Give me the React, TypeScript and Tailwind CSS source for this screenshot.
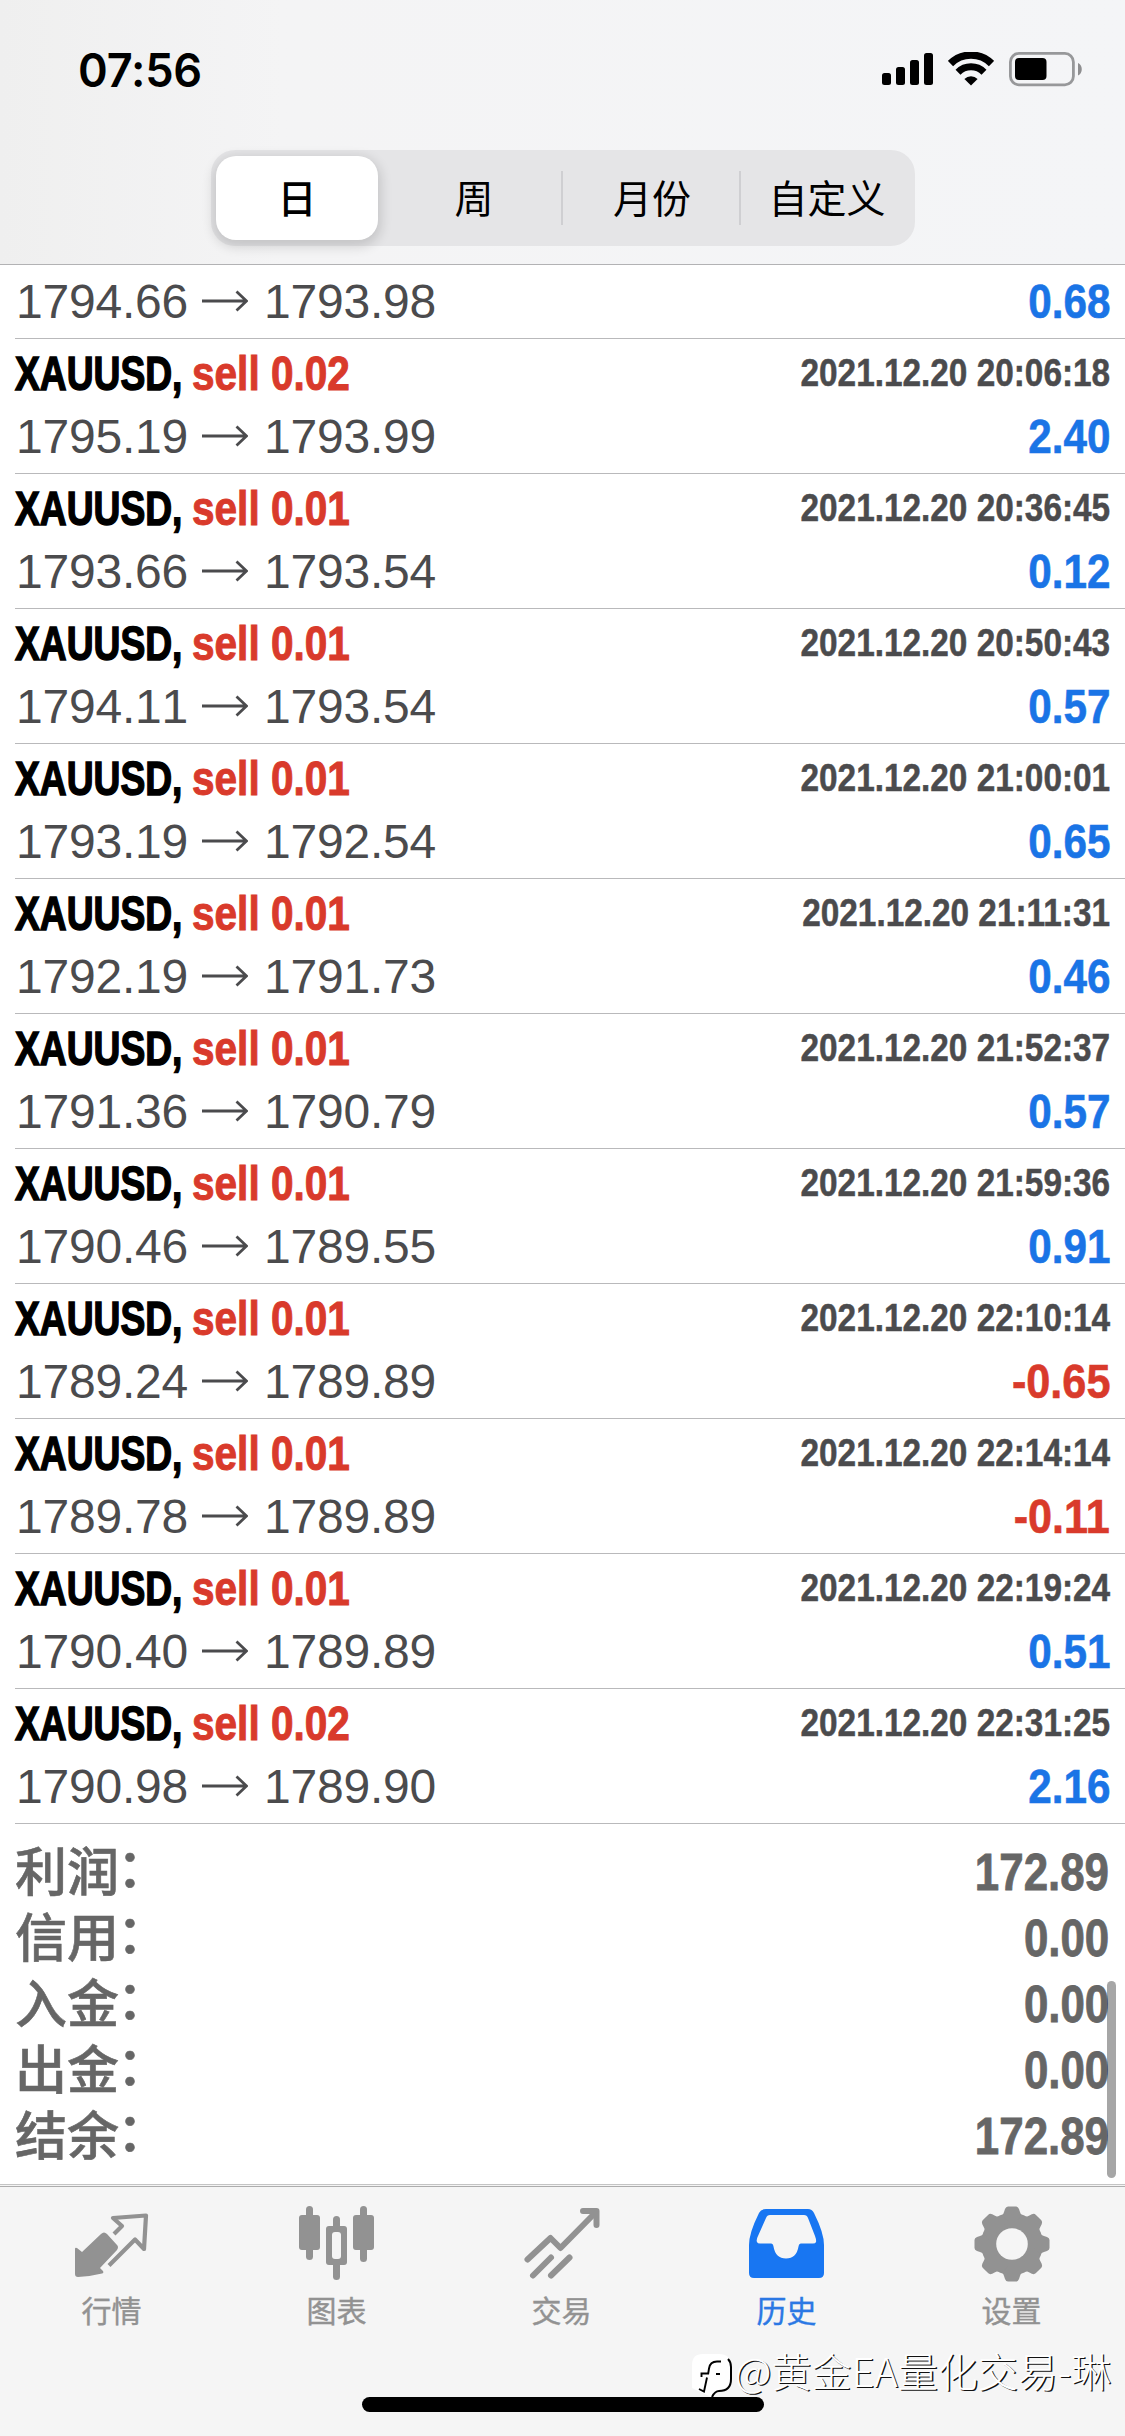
import React from "react";

type Deal = { lot: string; from: string; to: string; time: string; profit: string };

const deals: Deal[] = [
  { lot: "0.02", from: "1795.19", to: "1793.99", time: "2021.12.20 20:06:18", profit: "2.40" },
  { lot: "0.01", from: "1793.66", to: "1793.54", time: "2021.12.20 20:36:45", profit: "0.12" },
  { lot: "0.01", from: "1794.11", to: "1793.54", time: "2021.12.20 20:50:43", profit: "0.57" },
  { lot: "0.01", from: "1793.19", to: "1792.54", time: "2021.12.20 21:00:01", profit: "0.65" },
  { lot: "0.01", from: "1792.19", to: "1791.73", time: "2021.12.20 21:11:31", profit: "0.46" },
  { lot: "0.01", from: "1791.36", to: "1790.79", time: "2021.12.20 21:52:37", profit: "0.57" },
  { lot: "0.01", from: "1790.46", to: "1789.55", time: "2021.12.20 21:59:36", profit: "0.91" },
  { lot: "0.01", from: "1789.24", to: "1789.89", time: "2021.12.20 22:10:14", profit: "-0.65" },
  { lot: "0.01", from: "1789.78", to: "1789.89", time: "2021.12.20 22:14:14", profit: "-0.11" },
  { lot: "0.01", from: "1790.40", to: "1789.89", time: "2021.12.20 22:19:24", profit: "0.51" },
  { lot: "0.02", from: "1790.98", to: "1789.90", time: "2021.12.20 22:31:25", profit: "2.16" },
];

const totals = [
  ["利润", "172.89"],
  ["信用", "0.00"],
  ["入金", "0.00"],
  ["出金", "0.00"],
  ["结余", "172.89"],
];

function StatusBar() {
  return (
    <div className="flex h-[138px] items-center justify-between pl-[78px] pr-[42px]">
      <span className="origin-left scale-x-[0.96] font-['Inter',sans-serif] text-[47px] leading-none font-semibold tracking-[-0.2px] text-black">
        07:56
      </span>
      <div className="flex items-center">
        <svg width="52" height="34" viewBox="0 0 52 34" fill="#000">
          <rect x="0" y="21" width="9" height="12" rx="2.5" />
          <rect x="14" y="15" width="9" height="18" rx="2.5" />
          <rect x="28" y="8" width="9" height="25" rx="2.5" />
          <rect x="42" y="1" width="9" height="32" rx="2.5" />
        </svg>
        <svg className="ml-[14px]" width="46" height="34" viewBox="0 0 46 34" fill="none" stroke="#000">
          <path d="M2.500 11.600a29 29 0 0 1 41 0" strokeWidth="7.4" />
          <path d="M10 20.200a18.400 18.400 0 0 1 26 0" strokeWidth="7" />
          <path d="M23 33.6l-6.6-6.600a9.600 9.600 0 0 1 13.200 0z" fill="#000" stroke="none" />
        </svg>
        <svg className="ml-[15px]" width="74" height="36" viewBox="0 0 74 36">
          <rect x="1.4" y="2.4" width="63" height="31.4" rx="8.5" fill="none" stroke="#97989a" strokeWidth="2.8" />
          <rect x="6" y="7" width="31.5" height="22" rx="4" fill="#000" />
          <path d="M69 12c5 2 5 10.500 0 12.500z" fill="#8e8e90" />
        </svg>
      </div>
    </div>
  );
}

function PeriodTabs() {
  return (
    <div className="mr-[210px] ml-[211px] mt-3 grid h-24 grid-cols-4 items-center rounded-[24px] bg-[#e5e5e7] font-['Noto_Sans_CJK_SC',sans-serif] text-[39px] leading-none text-black">
      <div className="mr-[9px] ml-[5px] flex h-[84px] items-center justify-center rounded-[20px] bg-white pb-1 font-medium shadow-[0_4px_12px_3px_rgba(0,0,0,0.14)]">
        日
      </div>
      <div className="flex h-[54px] items-center justify-center pr-[6px] pb-1 pl-1">周</div>
      <div className="-ml-[2px] flex h-[54px] items-center justify-center border-l-2 border-[#cfcfd2] pb-1 pl-[2px]">月份</div>
      <div className="flex h-[54px] items-center justify-center border-l-2 border-[#cfcfd2] pr-[2px] pb-1">自定义</div>
    </div>
  );
}

function PriceLine({ from, to, profit }: { from: string; to: string; profit: string }) {
  const tone = profit.startsWith("-")
    ? "scale-x-[0.9] text-[#d93a2b] [-webkit-text-stroke:0.6px_#d93a2b]"
    : "scale-x-[0.88] text-[#1a74e6] [-webkit-text-stroke:0.6px_#1a74e6]";
  return (
    <div className="flex items-center justify-between leading-none">
      <div className="flex items-center text-[#4b4b4d]">
        <span className="w-[169px] pl-px tracking-[-0.2px] [font-kerning:none]">{from}</span>
        <svg className="mt-[-2px] mr-[15px] ml-[18px]" width="46" height="22" viewBox="0 0 46 22" fill="none" stroke="#4b4b4d" strokeWidth="2.8">
          <path d="M0 11h44M34.500 1.500L44.500 11l-10 9.500" />
        </svg>
        <span className="pl-px tracking-[-0.2px] [font-kerning:none]">{to}</span>
      </div>
      <span className={`origin-right font-bold ${tone}`}>{profit}</span>
    </div>
  );
}

function DealRow(d: Deal) {
  return (
    <div className="ml-[15px] h-[135px] border-b border-[#b9b9bb] pt-[11px] pr-[15px] text-[48px]">
      <div className="mb-[15px] flex items-start justify-between leading-none font-bold whitespace-nowrap">
        <div className="flex">
          <div className="w-[177px]">
            <span className="inline-block origin-left scale-x-[0.775] text-black [-webkit-text-stroke:1.5px_#000]">XAUUSD,</span>
          </div>
          <span className="origin-left scale-x-[0.845] text-[#d93a2b] [-webkit-text-stroke:1px_#d93a2b]">sell {d.lot}</span>
        </div>
        <span className="mt-[3px] origin-right scale-x-[0.855] text-[39px] leading-none text-[#4b4b4d] [-webkit-text-stroke:0.5px_#4b4b4d]">
          {d.time}
        </span>
      </div>
      <PriceLine from={d.from} to={d.to} profit={d.profit} />
    </div>
  );
}

function Totals() {
  return (
    <div className="h-[360px] pt-[12px] pr-[16px] pl-[15px]">
      {totals.map(([label, value]) => (
        <div key={label} className="flex h-[66px] items-center justify-between whitespace-nowrap text-[#666]">
          <div className="flex font-['Noto_Sans_CJK_SC',sans-serif] text-[52px] leading-none font-medium [-webkit-text-stroke:0.6px_#666]">
            <span>{label}</span>
            <span className="-mt-[4px] -ml-[2px]">：</span>
          </div>
          <span className="mt-[6px] origin-right scale-x-[0.86] text-[51px] leading-none font-bold [-webkit-text-stroke:0.8px_#666]">
            {value}
          </span>
        </div>
      ))}
    </div>
  );
}

const QuotesIcon = () => (
  <svg width="76" height="76" viewBox="0 0 76 76">
    <path d="M1 43q0-2 2-1l5 4 19-18q3-3 6 0l10 11q2 2 0 5L26 62l3 3q1 2-1 2.500-12 3-24 3.500-3 0-3-3z" fill="#929292" />
    <path d="M40 28l8-8-9-8 33-2.500-2 33.500-9-9.500-26 26" fill="none" stroke="#929292" strokeWidth="4.200" strokeLinejoin="round" />
  </svg>
);

const ChartIcon = () => (
  <svg width="76" height="76" viewBox="0 0 76 76">
    <g fill="#929292">
      <rect x="7" y="0" width="7" height="54" rx="3.500" />
      <rect x="0" y="9" width="21" height="35" rx="3" />
      <rect x="34" y="10" width="7" height="64" rx="3.500" />
      <rect x="27" y="20" width="21" height="39" rx="3" />
      <rect x="61" y="0" width="7" height="56" rx="3.500" />
      <rect x="54" y="9" width="21" height="35" rx="3" />
    </g>
    <rect x="33" y="26" width="9" height="27" rx="3" fill="#f5f5f5" />
  </svg>
);

const TradeIcon = () => (
  <svg width="76" height="76" viewBox="0 0 76 76" fill="none" stroke="#929292" strokeWidth="6" strokeLinecap="round" strokeLinejoin="round">
    <path d="M3.500 53.500L26.500 32l10 10L71 7" />
    <path d="M59 5h13.500v14" />
    <path d="M9 69.500L27 51.500M27 69.500L45.500 51.500" />
  </svg>
);

const HistoryIcon = () => (
  <svg width="76" height="76" viewBox="0 0 76 76">
    <path
      fillRule="evenodd"
      fill="#1876f2"
      d="M17 3h42q4 0 6 4 10 20 10 32v28q0 5-5 5H5q-5 0-5-5V39Q0 27 10 7q2-4 7-4zm4 6q-3 0-4 3L9 30q-2 4-1 6 .5 1.500 3 1.500h11q2 0 2.500 3 2 12 12.500 12t12.500-12q.5-3 2.500-3h12q2.500 0 3-1.500.5-2-1-6L59 12q-1-3-4-3z"
    />
  </svg>
);

const teeth = [0, 45, 90, 135, 180, 225, 270, 315];

const SettingsIcon = () => (
  <svg width="76" height="76" viewBox="0 0 76 76">
    <g fill="#929292">
      <circle cx="38" cy="38" r="31" />
      {teeth.map((a) => (
        <path key={a} transform={`rotate(${a} 38 38)`} d="M25 11q4-1 5-5l1-3q1-2.500 3-2.500h8q2 0 3 2.500l1 3q1 4 5 5v8H25z" />
      ))}
    </g>
    <circle cx="38" cy="38" r="15.800" fill="#f5f5f5" />
  </svg>
);

const nav = [
  { label: "行情", Icon: QuotesIcon },
  { label: "图表", Icon: ChartIcon },
  { label: "交易", Icon: TradeIcon },
  { label: "历史", Icon: HistoryIcon, active: true },
  { label: "设置", Icon: SettingsIcon },
];

function BottomBar() {
  return (
    <footer className="relative h-[252px] border-t border-[#c4c4c4] bg-[#f5f5f5]">
      <div className="h-[2px] border-b border-[#adadad] bg-[#f4f4f4]" />
      <nav className="-ml-px grid grid-cols-5 pt-[19px] pr-[1px]">
        {nav.map(({ label, Icon, active }) => (
          <div key={label} className="flex flex-col items-center">
            <Icon />
            <span
              className={`mt-[12px] font-['Noto_Sans_CJK_SC',sans-serif] text-[30px] leading-none ${
                active ? "text-[#2b78e4] [-webkit-text-stroke:0.4px_#2b78e4]" : "text-[#929292] [-webkit-text-stroke:0.4px_#929292]"
              }`}
            >
              {label}
            </span>
          </div>
        ))}
      </nav>
      <div className="absolute top-[212px] left-[362px] h-[15px] w-[402px] rounded-full bg-black" />
      <div className="absolute top-[167px] left-[691px] flex items-start">
        <svg width="42" height="50" viewBox="0 0 42 50">
          <path d="M12 2h16q12 0 12 12v13q0 12-12 12-5 0-8 6L1 36V13Q1 2 12 2z" fill="#fff" />
          <path d="M37 7q3 3 3 8v12q0 12-12 12-4 0-7 6" fill="none" stroke="#000" strokeWidth="2" />
          <path d="M30 9.500h-4q-7 0-8 7l-.8 5H10.500v3.500M16 25.500L13 39.500l-5-2.500M25 22h4" fill="none" stroke="#000" strokeWidth="1.900" />
        </svg>
        <span className="-mt-[2px] ml-[2px] font-['Noto_Sans_CJK_SC',sans-serif] text-[40px] leading-none font-light whitespace-nowrap text-white [text-shadow:1.3px_1.3px_0_#111]">
          @黄金EA量化交易-琳
        </span>
      </div>
    </footer>
  );
}

export default function App() {
  return (
    <div className="flex h-[2436px] w-[1125px] flex-col overflow-hidden bg-white font-['Liberation_Sans',Arial,sans-serif]">
      <header className="h-[265px] shrink-0 border-b border-[#b2b2b4] bg-linear-to-r from-[#efefef] via-[#f4f4f5] via-25% to-[#f4f5f7]">
        <StatusBar />
        <PeriodTabs />
      </header>
      <main className="relative h-[1919px] shrink-0">
        <div className="ml-[15px] h-[74px] border-b border-[#b9b9bb] pt-[13px] pr-[15px] text-[48px]">
          <PriceLine from="1794.66" to="1793.98" profit="0.68" />
        </div>
        {deals.map((d) => (
          <DealRow key={d.time} {...d} />
        ))}
        <Totals />
        <div className="absolute top-[1716px] right-[9px] h-[197px] w-[9px] rounded-full bg-black/35" />
      </main>
      <BottomBar />
    </div>
  );
}
